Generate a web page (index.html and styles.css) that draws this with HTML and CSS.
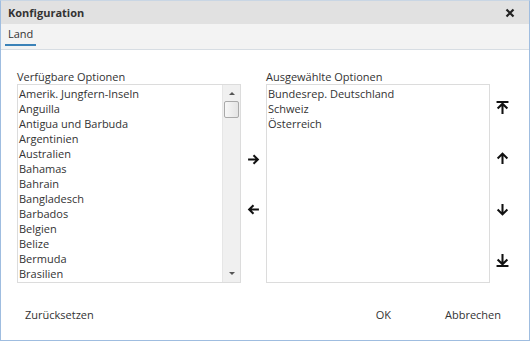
FILE: index.html
```html
<!DOCTYPE html>
<html lang="de">
<head>
  <meta charset="UTF-8" />
  <title>Konfiguration</title>
  <link rel="stylesheet" href="styles.css">
</head>
<body>
  <div class="dialog">
    <div class="titlebar">
      <span class="title">Konfiguration</span>
      <svg class="close" viewBox="0 0 10 10"><path d="M1.5 1.5l7 7M8.5 1.5l-7 7" /></svg>
    </div>
    <div class="tabs">
      <span class="tab active">Land</span>
    </div>

    <div class="content">
      <div class="column">
        <div class="caption">Verfügbare Optionen</div>
        <div class="listbox">
          <div class="items">
            <div>Amerik. Jungfern-Inseln</div>
            <div>Anguilla</div>
            <div>Antigua und Barbuda</div>
            <div>Argentinien</div>
            <div>Australien</div>
            <div>Bahamas</div>
            <div>Bahrain</div>
            <div>Bangladesch</div>
            <div>Barbados</div>
            <div>Belgien</div>
            <div>Belize</div>
            <div>Bermuda</div>
            <div>Brasilien</div>
          </div>
          <div class="scrollbar">
            <span class="sb-up"></span>
            <span class="sb-thumb"></span>
            <span class="sb-down"></span>
          </div>
        </div>
      </div>

      <div class="movers">
        <svg class="icon" viewBox="0 0 12 12"><path d="M1 6h9M6 2l4 4-4 4" /></svg>
        <svg class="icon" viewBox="0 0 12 12"><path d="M11 6H2M6 2L2 6l4 4" /></svg>
      </div>

      <div class="column">
        <div class="caption">Ausgewählte Optionen</div>
        <div class="listbox">
          <div class="items">
            <div>Bundesrep. Deutschland</div>
            <div>Schweiz</div>
            <div>Österreich</div>
          </div>
        </div>
      </div>

      <div class="order">
        <svg class="icon" viewBox="0 0 12 12"><path d="M0.5 1h11M6 2.5V12M1.5 7l4.5-4.5 4.5 4.5" /></svg>
        <svg class="icon" viewBox="0 0 12 12"><path d="M6 1.5V11M1.5 6l4.5-4.5 4.5 4.5" /></svg>
        <svg class="icon" viewBox="0 0 12 12"><path d="M6 1v9.5M1.5 6l4.5 4.5 4.5-4.5" /></svg>
        <svg class="icon" viewBox="0 0 12 12"><path d="M0.5 11h11M6 0v9.5M1.5 5l4.5 4.5 4.5-4.5" /></svg>
      </div>
    </div>

    <div class="footer">
      <button class="btn">Zurücksetzen</button>
      <span class="spacer"></span>
      <button class="btn">OK</button>
      <button class="btn cancel">Abbrechen</button>
    </div>
  </div>
</body>
</html>
```

FILE: styles.css
```css
body { margin: 0; font-family: "Open Sans", "DejaVu Sans", sans-serif; font-size: 11px; color: #333; background: #fff; }
.dialog { width: 530px; height: 341px; box-sizing: border-box; border: 1px solid #9fbde0; border-top-color: #c9d6e4; display: flex; flex-direction: column; }

.titlebar { height: 23px; background: #e1e1e1; display: flex; align-items: center; justify-content: space-between; padding: 0 14px 0 7px; }
.title { font-weight: bold; color: #333; font-size: 11px; }
.close { width: 10px; height: 10px; fill: none; stroke: #222; stroke-width: 2.2; }

.tabs { height: 25px; background: #f3f3f3; border-bottom: 1px solid #d7dde3; display: flex; align-items: flex-end; padding-left: 4px; }
.tab { padding: 0 3px 2px; line-height: 16px; border-bottom: 2px solid #3b82b8; margin-bottom: 3px; color: #333; }

.content { display: flex; padding: 19px 0 0 16px; flex-shrink: 0; }
.column { width: 224px; display: flex; flex-direction: column; }
.caption { height: 15px; line-height: 15px; color: #333; }
.listbox { height: 199px; flex-shrink: 0; box-sizing: border-box; border: 1px solid #dcdcdc; display: flex; }
.items { flex: 1; padding-top: 1px; line-height: 15px; white-space: nowrap; overflow: hidden; }
.items div { padding-left: 1px; }

.scrollbar { width: 17px; background: #f0f0f0; border-left: 1px solid #e6e6e6; display: flex; flex-direction: column; align-items: center; }
.sb-up, .sb-down { width: 0; height: 0; border-left: 3px solid transparent; border-right: 3px solid transparent; }
.sb-up { border-bottom: 3px solid #555; margin-top: 7px; }
.sb-down { border-top: 3px solid #555; margin-top: auto; margin-bottom: 7px; }
.sb-thumb { width: 13px; height: 15px; margin-top: 6px; border: 1px solid #a9a9a9; border-radius: 2px; background: linear-gradient(to right, #f7f7f7, #e4e4e4); }

.icon { width: 13px; height: 13px; fill: none; stroke: #111; stroke-width: 1.9; }
.movers { width: 25px; display: flex; flex-direction: column; align-items: center; padding-top: 84px; gap: 37px; box-sizing: border-box; }
.order { width: 25px; display: flex; flex-direction: column; align-items: center; padding-top: 32px; gap: 38px; box-sizing: border-box; }

.footer { flex: 1; display: flex; align-items: center; padding: 6px 16px 0 12px; }
.spacer { flex: 1; }
.btn { font: inherit; color: #333; background: none; border: none; padding: 4px 12px; cursor: pointer; }
.cancel { margin-left: 30px; }
```
